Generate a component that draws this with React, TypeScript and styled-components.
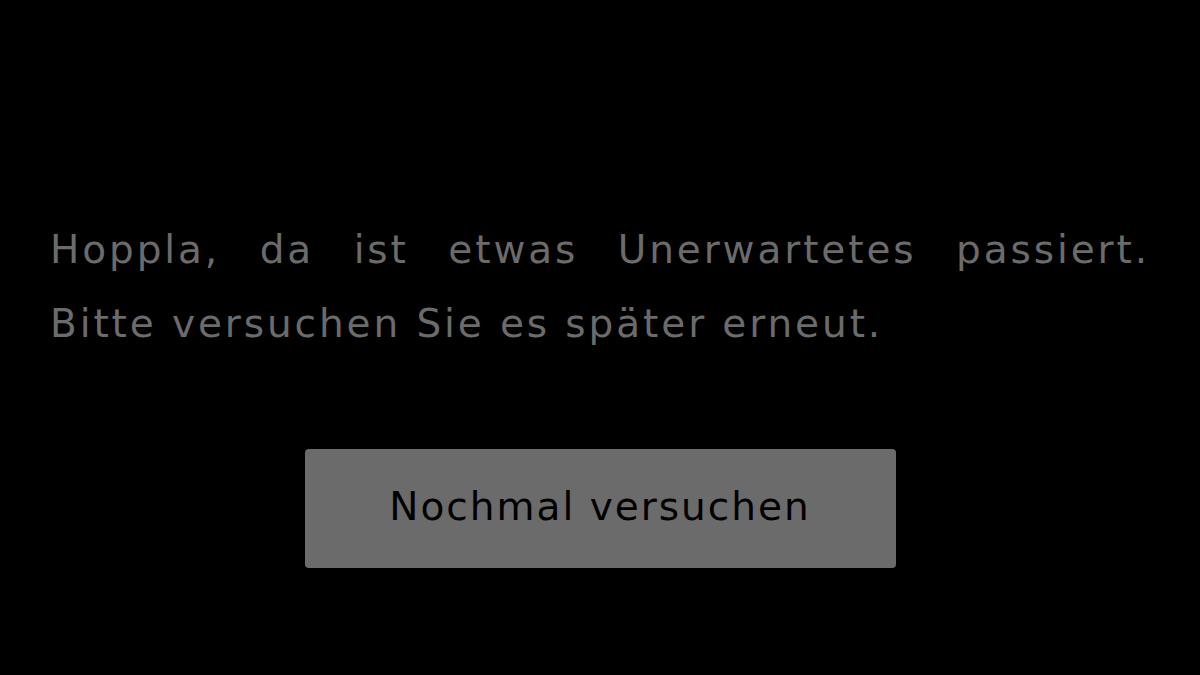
import React from 'react';
import styled, { createGlobalStyle } from 'styled-components';

const GlobalStyle = createGlobalStyle`
  html, body {
    margin: 0;
    padding: 0;
    background: #000;
  }
  body {
    font-family: "DejaVu Sans", "Noto Sans", sans-serif;
  }
`

const Screen = styled.div`
  width: 1200px;
  height: 675px;
  background: #000;
  display: flex;
  flex-direction: column;
  align-items: center;
  padding: 213px 50px 0 50px;
  box-sizing: border-box;
`

const Message = styled.p`
  margin: 0;
  width: 100%;
  color: #6b6b6b;
  font-size: 39px;
  line-height: 74px;
  letter-spacing: 2.9px;
  text-align: justify;
  text-align-last: left;
`

const RetryButton = styled.button`
  margin-top: 88px;
  width: 591px;
  height: 119px;
  padding: 0 0 4px 0;
  background: #6b6b6b;
  color: #000;
  border: none;
  border-radius: 4px;
  font-family: "DejaVu Sans", "Noto Sans", sans-serif;
  font-size: 39px;
  letter-spacing: 2px;
  cursor: pointer;
`

function App() {
  return (
    <>
      <GlobalStyle />
      <Screen>
        <Message>
          Hoppla, da ist etwas Unerwartetes passiert. Bitte versuchen Sie es später erneut.
        </Message>
        <RetryButton>Nochmal versuchen</RetryButton>
      </Screen>
    </>
  );
}

export default App;
